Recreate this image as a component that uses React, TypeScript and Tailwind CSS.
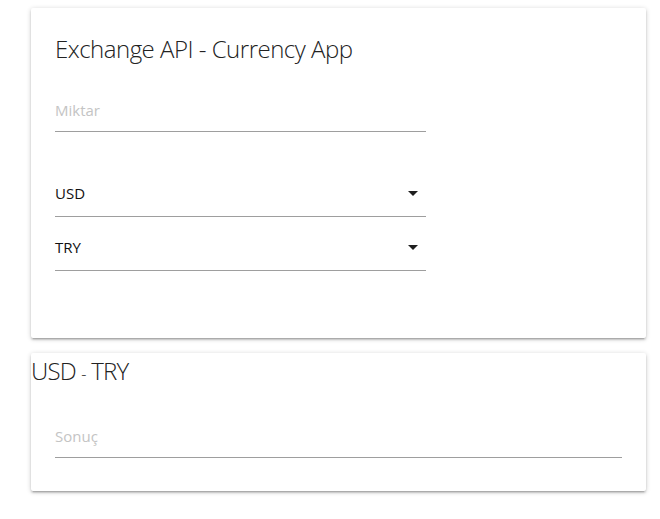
import React from "react";

function Arrow() {
  return (
    <svg width="10" height="5" viewBox="0 0 10 5" className="block">
      <path d="M0 0 L10 0 L5 5 Z" fill="#1f1f1f" />
    </svg>
  );
}

function Field({ label, className }: { label: string; className?: string }) {
  return (
    <div className={"border-b border-[#9e9e9e] pb-[11px] " + (className ?? "")}>
      <div className="text-[15px] leading-[20px] text-[#c4c4c4]">{label}</div>
    </div>
  );
}

function SelectField({ value, className }: { value: string; className?: string }) {
  return (
    <div className={"flex items-center justify-between border-b border-[#9e9e9e] pb-[13px] " + (className ?? "")}>
      <div className="text-[15px] leading-[20px] text-[#111]">{value}</div>
      <div className="mr-[8px]">
        <Arrow />
      </div>
    </div>
  );
}

export default function App() {
  const shadow =
    "shadow-[0_2px_2px_0_rgba(0,0,0,0.14),0_3px_1px_-2px_rgba(0,0,0,0.12),0_1px_5px_0_rgba(0,0,0,0.2)]";
  return (
    <div
      className="min-h-[519px] bg-white pt-[8px] pl-[31px]"
      style={{ fontFamily: '"Open Sans", "Noto Sans", sans-serif' }}
    >
      <div className={"w-[615px] h-[330px] rounded-[2px] bg-white px-[24px] pt-[25px] " + shadow}>
        <div className="text-[24px] leading-[32px] font-light tracking-[-0.5px] text-[#222]">
          Exchange API - Currency App
        </div>
        <div className="w-[371px]">
          <Field label="Miktar" className="mt-[35px]" />
          <SelectField value="USD" className="mt-[51px]" />
          <SelectField value="TRY" className="mt-[20px]" />
        </div>
      </div>
      <div className={"mt-[15px] w-[615px] h-[138px] rounded-[2px] bg-white pt-[2px] " + shadow}>
        <div className="text-[24px] leading-[32px] font-light tracking-[-0.8px] text-[#222]">
          USD <span className="text-[16px]">-</span> TRY
        </div>
        <div className="px-[24px]">
          <Field label="Sonuç" className="mt-[36px]" />
        </div>
      </div>
    </div>
  );
}
